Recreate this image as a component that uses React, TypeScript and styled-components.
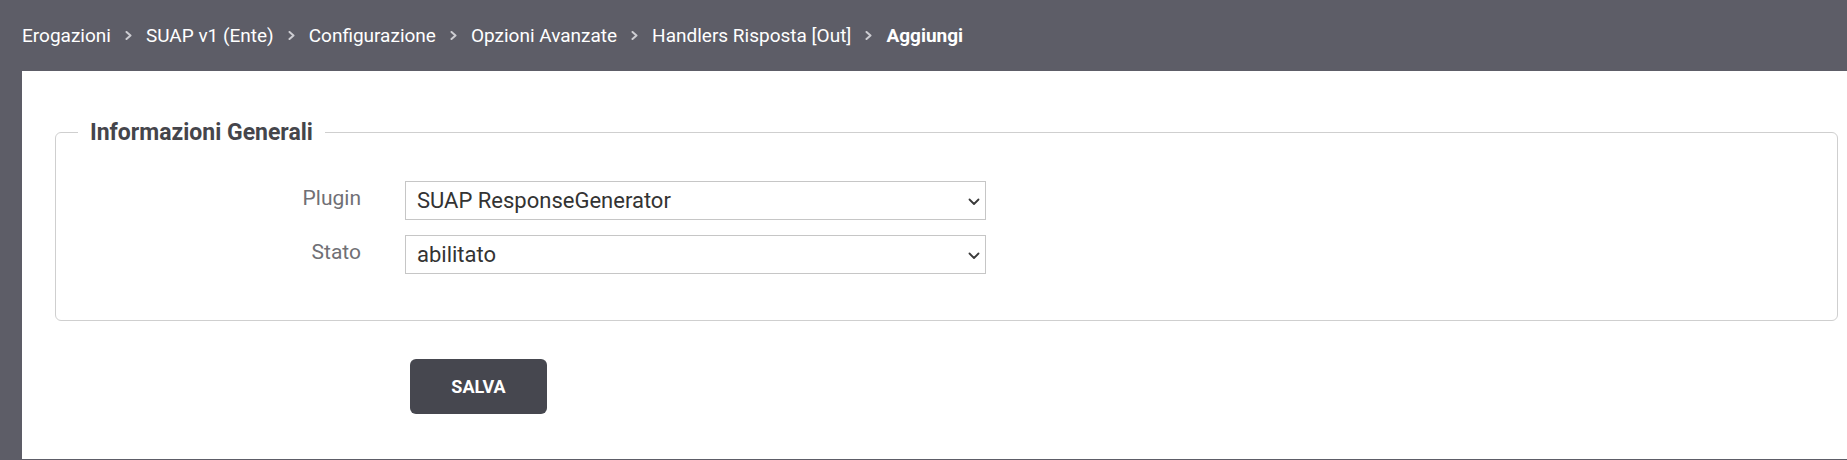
import React from "react";
import styled, { createGlobalStyle } from "styled-components";

const GlobalStyle = createGlobalStyle`
  html, body { margin: 0; padding: 0; }
  body {
    background: #5d5d67;
    font-family: Roboto, "Noto Sans", "Liberation Sans", Arial, sans-serif;
    height: 460px;
    overflow: hidden;
  }
  * { box-sizing: border-box; }
`;

const Page = styled.div`
  display: flex;
  flex-direction: column;
  height: 459px;
`;

const Header = styled.nav`
  height: 71px;
  flex-shrink: 0;
  display: flex;
  align-items: center;
  padding-left: 22px;
`;

const Crumb = styled.span<{ $current?: boolean }>`
  font-size: 19px;
  color: #ffffff;
  font-weight: ${(p) => (p.$current ? 700 : 400)};
  white-space: nowrap;
`;

const Sep = styled.svg`
  width: 7px;
  height: 9px;
  margin: 0 14px;
  flex-shrink: 0;
`;

const Panel = styled.main`
  flex: 1;
  margin-left: 22px;
  background: #ffffff;
  padding-top: 46px;
`;

const Fieldset = styled.fieldset`
  margin: 0 9px 0 33px;
  border: 1px solid #cfcfcf;
  border-radius: 6px;
  padding: 34px 22px 46px 22px;
  min-width: 0;
`;

const Legend = styled.legend`
  font-size: 23px;
  line-height: 28px;
  font-weight: 700;
  color: #45454b;
  padding: 2px 12px 0;
`;

const FormGrid = styled.div`
  display: grid;
  grid-template-columns: 283px 581px;
  column-gap: 44px;
  row-gap: 15px;
`;

const Label = styled.label`
  font-size: 21px;
  line-height: 25px;
  color: #707075;
  text-align: right;
  padding-top: 5px;
`;

const SelectWrap = styled.div`
  position: relative;
  height: 39px;
`;

const Select = styled.select`
  appearance: none;
  -webkit-appearance: none;
  display: block;
  height: 39px;
  width: 100%;
  font-family: inherit;
  font-size: 22px;
  color: #333333;
  background: #ffffff;
  border: 1px solid #c6c6c6;
  border-radius: 0;
  padding: 0 30px 0 11px;
  outline: none;
`;

const Arrow = styled.svg`
  position: absolute;
  right: 6px;
  top: 50%;
  width: 12px;
  height: 8px;
  margin-top: -3px;
  pointer-events: none;
`;

const Actions = styled.div`
  margin: 38px 0 0 388px;
`;

const Button = styled.button`
  width: 137px;
  height: 55px;
  border: none;
  border-radius: 6px;
  background: #46474f;
  color: #ffffff;
  font-family: inherit;
  font-size: 18px;
  font-weight: 700;
  text-transform: uppercase;
  cursor: pointer;
`;

const Chevron = () => (
  <Sep viewBox="0 0 7 9" aria-hidden="true">
    <polyline points="1.5,1 5.5,4.5 1.5,8" fill="none" stroke="#cdcdd2" strokeWidth="2" strokeLinecap="round" strokeLinejoin="round" />
  </Sep>
);

const Dropdown = ({ id, value, options }: { id: string; value: string; options: string[] }) => (
  <SelectWrap>
    <Select id={id} defaultValue={value}>
      {options.map((o) => (
        <option key={o} value={o}>
          {o}
        </option>
      ))}
    </Select>
    <Arrow viewBox="0 0 12 8" aria-hidden="true">
      <polyline points="1.5,1.5 6,6 10.5,1.5" fill="none" stroke="#3a3a3a" strokeWidth="1.8" strokeLinecap="round" strokeLinejoin="round" />
    </Arrow>
  </SelectWrap>
);

const crumbs = [
  "Erogazioni",
  "SUAP v1 (Ente)",
  "Configurazione",
  "Opzioni Avanzate",
  "Handlers Risposta [Out]",
];

export default function App() {
  return (
    <>
      <GlobalStyle />
      <Page>
        <Header>
          {crumbs.map((c) => (
            <React.Fragment key={c}>
              <Crumb>{c}</Crumb>
              <Chevron />
            </React.Fragment>
          ))}
          <Crumb $current>Aggiungi</Crumb>
        </Header>
        <Panel>
          <Fieldset>
            <Legend>Informazioni Generali</Legend>
            <FormGrid>
              <Label htmlFor="plugin">Plugin</Label>
              <Dropdown id="plugin" value="SUAP ResponseGenerator" options={["SUAP ResponseGenerator"]} />
              <Label htmlFor="stato">Stato</Label>
              <Dropdown id="stato" value="abilitato" options={["abilitato", "disabilitato"]} />
            </FormGrid>
          </Fieldset>
          <Actions>
            <Button type="button">Salva</Button>
          </Actions>
        </Panel>
      </Page>
    </>
  );
}
